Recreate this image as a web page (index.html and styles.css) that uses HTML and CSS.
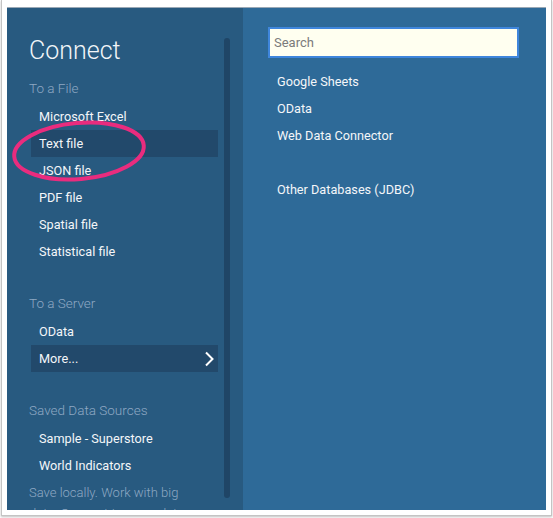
FILE: index.html
```html
<!DOCTYPE html>
<html>
<head>
<meta charset="utf-8">
<link rel="stylesheet" href="styles.css">
</head>
<body>
<div class="frame">
  <div class="app">
    <div class="left">
      <div class="left-content">
        <h1 class="title">Connect</h1>
        <div class="section">
          <div class="heading">To a File</div>
          <div class="item">Microsoft Excel</div>
          <div class="item active">Text file</div>
          <div class="item">JSON file</div>
          <div class="item">PDF file</div>
          <div class="item">Spatial file</div>
          <div class="item">Statistical file</div>
        </div>
        <div class="section">
          <div class="heading">To a Server</div>
          <div class="item">OData</div>
          <div class="item active more">More...
            <svg class="chev" width="10" height="16" viewBox="0 0 10 16"><polyline points="2,1.5 8.5,8 2,14.5" fill="none" stroke="#ffffff" stroke-width="2"/></svg>
          </div>
        </div>
        <div class="section">
          <div class="heading">Saved Data Sources</div>
          <div class="item">Sample - Superstore</div>
          <div class="item">World Indicators</div>
          <p class="note">Save locally. Work with big data. Connect to more data</p>
        </div>
      </div>
      <div class="scroll"></div>
    </div>
    <div class="right">
      <div class="search">Search</div>
      <div class="list">
        <div class="ritem">Google Sheets</div>
        <div class="ritem">OData</div>
        <div class="ritem">Web Data Connector</div>
        <div class="ritem"></div>
        <div class="ritem">Other Databases (JDBC)</div>
      </div>
    </div>
    <svg class="annot" width="160" height="80" viewBox="0 0 160 80">
      <ellipse cx="80" cy="40" rx="65" ry="28" fill="none" stroke="#e92c7e" stroke-width="4" transform="rotate(-5 80 40)"/>
    </svg>
  </div>
</div>
</body>
</html>
```

FILE: styles.css
```css
* { box-sizing: border-box; }
html, body { margin: 0; padding: 0; background: #ffffff; }
body {
  font-family: Roboto, "Liberation Sans", Arial, sans-serif;
  width: 553px;
  height: 518px;
  overflow: hidden;
}
.frame {
  margin-left: 1px;
  width: 551px;
  height: 516px;
  padding: 7px 5px 5px 5px;
  background: #ffffff;
  border: 1px solid #c4c4c4;
  border-top: none;
  box-shadow: 0 1px 2px rgba(0,0,0,0.25);
}
.app {
  position: relative;
  display: flex;
  width: 539px;
  height: 503px;
  overflow: hidden;
  border-top: 1px solid #9aa8b5;
}
.left {
  display: flex;
  width: 236px;
  flex: none;
  background: #285a80;
}
.left-content {
  width: 216px;
  flex: none;
  padding: 28px 5px 0 24px;
}
.title {
  margin: 0 0 12px -2px;
  font-size: 25px;
  line-height: 30px;
  font-weight: 300;
  color: #f2f5f8;
}
.section { margin-bottom: 28px; }
.heading {
  margin: 0 0 5px -2px;
  font-size: 13.5px;
  line-height: 20px;
  font-weight: 300;
  color: #8ea8c3;
}
.item {
  display: flex;
  align-items: center;
  justify-content: space-between;
  height: 27px;
  padding: 0 4px 0 8px;
  font-size: 12.7px;
  color: #f4f6f9;
}
.item.active { background: #22496b; }
.chev { display: block; }
.note {
  margin: 3px 0 0 -2px;
  width: 180px;
  font-size: 13px;
  line-height: 21px;
  font-weight: 300;
  color: #8ea8c3;
}
.scroll {
  width: 6px;
  flex: none;
  margin: 30px 0 12px 1px;
  border-radius: 3px;
  background: #1f4566;
}
.right {
  flex: 1;
  background: #2e6a98;
  padding: 19px 0 0 25px;
}
.search {
  width: 251px;
  height: 31px;
  padding: 0 4px;
  display: flex;
  align-items: center;
  background: #fffff0;
  border: 2px solid #3f86dc;
  font-size: 13px;
  color: #7b7b7b;
}
.list { margin-top: 10px; padding-left: 9px; }
.ritem {
  height: 27px;
  display: flex;
  align-items: center;
  font-size: 12.7px;
  color: #f4f6f9;
}
.annot {
  position: absolute;
  left: -8px;
  top: 103px;
}
```
